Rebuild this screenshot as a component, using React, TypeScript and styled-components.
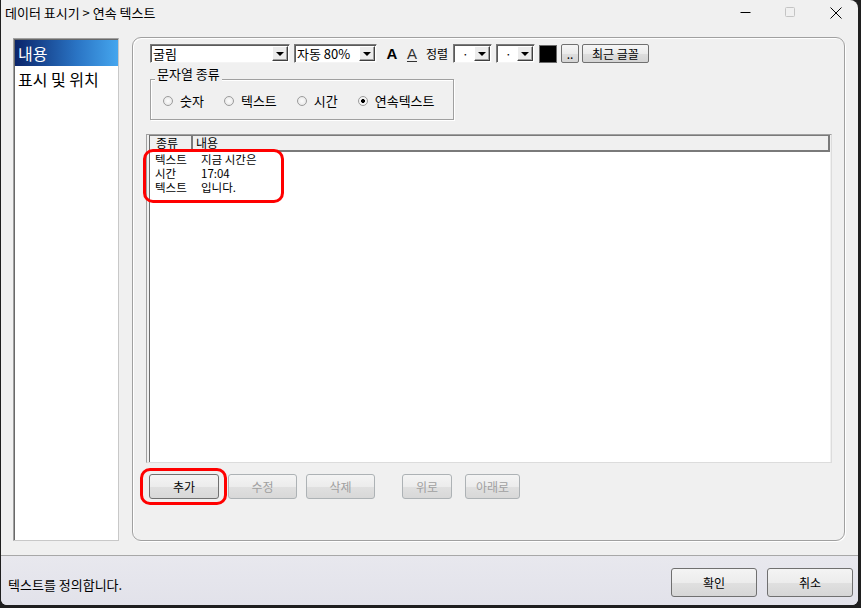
import React from 'react'
import styled, { createGlobalStyle } from 'styled-components'

const GlobalStyle = createGlobalStyle`
    html, body {
        margin: 0;
        padding: 0;
        background: #1f1f1f;
    }
    body {
        width: 861px;
        height: 608px;
        overflow: hidden;
        font-family: "Noto Sans CJK KR", "Noto Sans", sans-serif;
        font-size: 12px;
        color: #000;
    }
`

const Window = styled.div`
    margin-left: 1px;
    width: 857px;
    height: 605px;
    background: #f0f0f0;
    border-radius: 0 8px 6px 6px;
    display: flex;
    flex-direction: column;
    overflow: hidden;
`

const TitleBar = styled.div`
    height: 25px;
    display: flex;
    align-items: center;
    padding-left: 4px;

    .title {
        flex: 1;
        font-size: 13px;
        line-height: 16px;
    }
`

const CaptionButton = styled.div`
    width: 45px;
    height: 25px;
    display: flex;
    align-items: center;
    justify-content: center;
`

const Body = styled.div`
    flex: 1;
    display: flex;
    gap: 13px;
    padding: 12px 13px 14px 12px;
    min-height: 0;
`

const SideList = styled.div`
    width: 106px;
    box-sizing: border-box;
    margin-top: 1px;
    background: #fff;
    border: 1px solid;
    border-color: #a0a0a0 #c8c8c8 #c8c8c8 #a0a0a0;
    box-shadow: inset 1px 1px 0 #696969;
    padding: 1px 0 0 1px;
`

const SideItem = styled.div<{ $selected?: boolean }>`
    height: 26px;
    line-height: 26px;
    padding-left: 3px;
    font-size: 16px;
    white-space: nowrap;
    color: ${p => (p.$selected ? '#fff' : '#000')};
    background: ${p => (p.$selected ? 'linear-gradient(to right, #0a246a, #2a74c4 60%, #45a6ee)' : 'transparent')};
`

const Panel = styled.div`
    flex: 1;
    box-sizing: border-box;
    border: 1px solid #a0a0a0;
    border-radius: 9px;
    box-shadow: inset 1px 1px 0 #fff, 1px 1px 0 #fff;
    padding: 6px 0 0 17px;
    display: flex;
    flex-direction: column;
    align-items: flex-start;
`

const Toolbar = styled.div`
    height: 19px;
    display: flex;
    align-items: center;
`

const Combo = styled.div<{ $w: number; $ml?: number }>`
    width: ${p => p.$w}px;
    height: 19px;
    margin-left: ${p => p.$ml ?? 0}px;
    box-sizing: border-box;
    display: flex;
    align-items: center;
    background: #fff;
    border: 1px solid;
    border-color: #7a7a7a #f4f4f4 #f4f4f4 #7a7a7a;
    box-shadow: inset 1px 1px 0 #5a5a5a;

    .value {
        flex: 1;
        padding-left: 2px;
        font-size: 13px;
        line-height: 17px;
        white-space: nowrap;
    }
`

const SmallValue = styled.span`
    flex: 1;
    padding-left: 8px;
    font-size: 12px;
    line-height: 15px;
`

const DropButton = styled.div`
    width: 16px;
    height: 15px;
    margin-right: 1px;
    box-sizing: border-box;
    background: #ececec;
    border: 1px solid;
    border-color: #fff #404040 #404040 #fff;
    box-shadow: inset -1px -1px 0 #a0a0a0;
    display: flex;
    align-items: center;
    justify-content: center;

    &::after {
        content: '';
        width: 0;
        height: 0;
        border-left: 4px solid transparent;
        border-right: 4px solid transparent;
        border-top: 4px solid #000;
    }
`

const FontGlyph = styled.span<{ $bold?: boolean; $ml: number }>`
    width: 20px;
    margin-left: ${p => p.$ml}px;
    text-align: center;
    font-family: "Liberation Sans", Arial, sans-serif;
    font-size: 15px;
    line-height: 17px;
    font-weight: ${p => (p.$bold ? 700 : 400)};
    color: ${p => (p.$bold ? '#000' : '#333')};
    text-decoration: ${p => (p.$bold ? 'none' : 'underline')};
    text-underline-offset: 2px;
`

const ToolLabel = styled.span`
    width: 27px;
    margin-left: 4px;
    font-size: 12px;
    line-height: 15px;
    white-space: nowrap;
`

const Swatch = styled.div`
    width: 18px;
    height: 18px;
    margin-left: 4px;
    box-sizing: border-box;
    background: #000;
    border: 1px solid #6a6a6a;
`

const ToolButton = styled.button<{ $w: number; $ml: number }>`
    width: ${p => p.$w}px;
    height: 19px;
    margin-left: ${p => p.$ml}px;
    padding: 0;
    box-sizing: border-box;
    border: 1px solid #707070;
    border-radius: 2px;
    background: linear-gradient(#f6f6f6, #ebebeb 50%, #dedede 51%, #d4d4d4);
    font-family: inherit;
    font-size: 12px;
    line-height: 15px;
    color: #000;
    display: flex;
    align-items: center;
    justify-content: center;
`

const GroupBox = styled.div`
    position: relative;
    width: 304px;
    height: 41px;
    margin-top: 16px;
    box-sizing: border-box;
    border: 1px solid #a0a0a0;
    box-shadow: inset 1px 1px 0 #fff, 1px 1px 0 #fff;
    display: flex;
    align-items: center;
    gap: 20px;
    padding: 2px 0 0 12px;
`

const Legend = styled.span`
    position: absolute;
    top: -13px;
    left: 4px;
    padding: 0 2px;
    background: #f0f0f0;
    font-size: 13px;
    line-height: 14px;
`

const Radio = styled.label<{ $checked?: boolean }>`
    display: flex;
    align-items: center;
    font-size: 13px;
    line-height: 15px;
    white-space: nowrap;

    &::before {
        content: '';
        width: 10px;
        height: 10px;
        margin-right: 7px;
        box-sizing: border-box;
        border-radius: 50%;
        border: 1px solid #9c9c9c;
        background: ${p => (p.$checked
            ? 'radial-gradient(circle, #000 0 1.8px, #f4f4f4 2.2px)'
            : 'radial-gradient(circle, #fdfdfd, #e2e2e2)')};
    }
`

const ListFrame = styled.div`
    width: 686px;
    height: 329px;
    margin: 14px 0 0 -4px;
    box-sizing: border-box;
    border: 1px solid;
    border-color: #a0a0a0 #dcdcdc #dcdcdc #a0a0a0;
    background: #f0f0f0;
    padding: 0 1px 0 2px;
    display: flex;
`

const ListInner = styled.div`
    flex: 1;
    position: relative;
    background: #fff;
    border-left: 1px solid #6d6d6d;
    display: flex;
    flex-direction: column;
`

const ListHeader = styled.div`
    height: 17px;
    box-sizing: border-box;
    display: flex;
    background: #f0f0f0;
    border-top: 1px solid #7a7a7a;
    border-bottom: 2px solid #7a7a7a;
    border-right: 2px solid #7a7a7a;
`

const HeaderCell = styled.div<{ $w?: number }>`
    ${p => (p.$w ? `width: ${p.$w}px; border-right: 2px solid #7a7a7a;` : 'flex: 1;')}
    box-sizing: border-box;
    padding-left: ${p => (p.$w ? 6 : 3)}px;
    font-size: 12px;
    line-height: 13px;
`

const Row = styled.div`
    display: flex;
    height: 14px;
    font-size: 11.5px;
    line-height: 14px;
    white-space: nowrap;

    .kind {
        width: 51px;
        padding-left: 5px;
        box-sizing: border-box;
    }
`

const Annotation = styled.div<{ $l: number; $t: number; $w: number; $h: number }>`
    position: absolute;
    left: ${p => p.$l}px;
    top: ${p => p.$t}px;
    width: ${p => p.$w}px;
    height: ${p => p.$h}px;
    box-sizing: border-box;
    border: 3px solid #f00;
    border-radius: 10px;
    pointer-events: none;
`

const ButtonRow = styled.div`
    display: flex;
    margin: 11px 0 0 -1px;
`

const ActionButton = styled.button<{ $w: number; $ml: number; $disabled?: boolean }>`
    position: relative;
    width: ${p => p.$w}px;
    height: 25px;
    margin-left: ${p => p.$ml}px;
    padding: 0;
    box-sizing: border-box;
    border: 1px solid ${p => (p.$disabled ? '#adb2b5' : '#707070')};
    border-radius: 3px;
    background: linear-gradient(#f4f4f4, #ececec 50%, #e0e0e0 51%, #d8d8d8);
    font-family: inherit;
    font-size: 12px;
    color: ${p => (p.$disabled ? '#a0a0a0' : '#000')};
`

const StatusBar = styled.div`
    height: 50px;
    box-sizing: border-box;
    border-top: 1px solid #a8a8a8;
    background: linear-gradient(#e8e8ee, #e2e2ea);
    display: flex;
    align-items: flex-start;
    padding: 12px 5px 0 7px;

    .message {
        flex: 1;
        margin-top: 8px;
        font-size: 13px;
        line-height: 17px;
    }
`

const DialogButton = styled.button<{ $ml?: number }>`
    width: 86px;
    height: 29px;
    margin-left: ${p => p.$ml ?? 0}px;
    padding: 0;
    box-sizing: border-box;
    border: 1px solid #707070;
    border-radius: 3px;
    background: linear-gradient(#f4f4f4, #ececec 50%, #e0e0e0 51%, #d6d6d6);
    font-family: inherit;
    font-size: 12px;
    color: #000;
`

const App: React.FC = () => {
    return (
        <>
            <GlobalStyle />
            <Window>
                <TitleBar>
                    <span className="title">데이터 표시기 &gt; 연속 텍스트</span>
                    <CaptionButton>
                        <svg width="11" height="11" viewBox="0 0 11 11">
                            <path d="M0.5 5.5h10" stroke="#000" strokeWidth="1" />
                        </svg>
                    </CaptionButton>
                    <CaptionButton>
                        <svg width="11" height="11" viewBox="0 0 11 11">
                            <rect x="0.5" y="0.5" width="9" height="9" rx="1" fill="none" stroke="#c4c4c4" />
                        </svg>
                    </CaptionButton>
                    <CaptionButton>
                        <svg width="12" height="12" viewBox="0 0 12 12">
                            <path d="M0.5 0.5l11 11M11.5 0.5l-11 11" stroke="#000" strokeWidth="1" />
                        </svg>
                    </CaptionButton>
                </TitleBar>

                <Body>
                    <SideList>
                        <SideItem $selected>내용</SideItem>
                        <SideItem>표시 및 위치</SideItem>
                    </SideList>

                    <Panel>
                        <Toolbar>
                            <Combo $w={140}>
                                <span className="value">굴림</span>
                                <DropButton />
                            </Combo>
                            <Combo $w={83} $ml={4}>
                                <span className="value">자동 80%</span>
                                <DropButton />
                            </Combo>
                            <FontGlyph $bold $ml={5}>A</FontGlyph>
                            <FontGlyph $ml={0}>A</FontGlyph>
                            <ToolLabel>정렬</ToolLabel>
                            <Combo $w={39}>
                                <SmallValue>·</SmallValue>
                                <DropButton />
                            </Combo>
                            <Combo $w={39} $ml={4}>
                                <SmallValue>·</SmallValue>
                                <DropButton />
                            </Combo>
                            <Swatch />
                            <ToolButton $w={18} $ml={4}>..</ToolButton>
                            <ToolButton $w={67} $ml={3}>최근 글꼴</ToolButton>
                        </Toolbar>

                        <GroupBox>
                            <Legend>문자열 종류</Legend>
                            <Radio>숫자</Radio>
                            <Radio>텍스트</Radio>
                            <Radio>시간</Radio>
                            <Radio $checked>연속텍스트</Radio>
                        </GroupBox>

                        <ListFrame>
                            <ListInner>
                                <ListHeader>
                                    <HeaderCell $w={43}>종류</HeaderCell>
                                    <HeaderCell>내용</HeaderCell>
                                </ListHeader>
                                <Row><span className="kind">텍스트</span><span>지금 시간은</span></Row>
                                <Row><span className="kind">시간</span><span>17:04</span></Row>
                                <Row><span className="kind">텍스트</span><span>입니다.</span></Row>
                                <Annotation $l={-7} $t={14} $w={141} $h={54} />
                            </ListInner>
                        </ListFrame>

                        <ButtonRow>
                            <ActionButton $w={70} $ml={0}>
                                추가
                                <Annotation $l={-10} $t={-7} $w={87} $h={37} />
                            </ActionButton>
                            <ActionButton $w={69} $ml={9} $disabled>수정</ActionButton>
                            <ActionButton $w={69} $ml={9} $disabled>삭제</ActionButton>
                            <ActionButton $w={50} $ml={27} $disabled>위로</ActionButton>
                            <ActionButton $w={55} $ml={13} $disabled>아래로</ActionButton>
                        </ButtonRow>
                    </Panel>
                </Body>

                <StatusBar>
                    <span className="message">텍스트를 정의합니다.</span>
                    <DialogButton>확인</DialogButton>
                    <DialogButton $ml={10}>취소</DialogButton>
                </StatusBar>
            </Window>
        </>
    )
}

export default App
